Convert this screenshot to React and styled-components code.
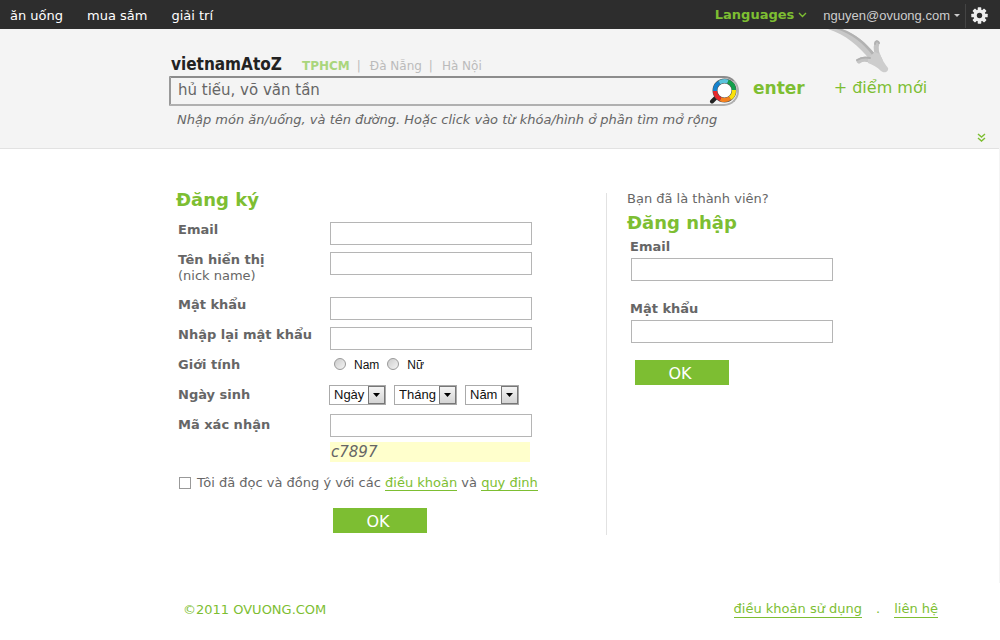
import React, { useState } from "react";
import styled, { createGlobalStyle, ThemeProvider } from "styled-components";

const theme = {
  green: "#7dbe32",
  lightGreen: "#aad67c",
  text: "#666",
  bar: "#2d2d2d",
  panel: "#f4f4f4",
  line: "#e2e2e2",
  inputLine: "#b5b5b5",
  wide: '"DejaVu Sans", Verdana, sans-serif',
  small: '"Liberation Sans", Arial, sans-serif'
};

const GlobalStyle = createGlobalStyle`
  * {
    box-sizing: border-box;
  }

  body {
    margin: 0;
    background: #fff;
    color: ${theme.text};
    font-family: ${theme.wide};
    font-size: 13px;
    line-height: 16px;
  }

  input, select, button {
    font: inherit;
    color: inherit;
  }
`;

const TopBar = styled.nav`
  display: flex;
  align-items: center;
  height: 29px;
  padding: 2px 12px 0 10px;
  background: ${props => props.theme.bar};
`;

const TopLink = styled.a`
  margin-right: 24px;
  color: #fff;
  text-decoration: none;
`;

const Account = styled.div`
  display: flex;
  align-items: center;
  margin-left: auto;
`;

const BarButton = styled.button`
  display: flex;
  align-items: center;
  gap: 4px;
  padding: 0;
  border: none;
  background: none;
  cursor: pointer;
`;

const LanguageButton = styled(BarButton)`
  margin-right: 16px;
  padding-bottom: 2px;
  color: ${props => props.theme.green};
  font-weight: bold;
`;

const UserButton = styled(BarButton)`
  padding-right: 5px;
  color: #ccc;
  font-family: ${props => props.theme.small};
`;

const SettingsButton = styled(BarButton)`
  height: 24px;
  padding-left: 5px;
  border-left: 1px solid #444;
`;

const Header = styled.header`
  position: relative;
  padding: 27px 8px 0 169px;
  height: 120px;
  background: ${props => props.theme.panel};
  border-bottom: 1px solid ${props => props.theme.line};
`;

const TitleRow = styled.div`
  display: flex;
  align-items: center;
  height: 20px;
`;

const Logo = styled.a`
  width: 133px;
  padding: 0 0 4px 2px;
  color: #222;
  font-family: "DejaVu Sans Condensed", "DejaVu Sans", sans-serif;
  font-size: 17px;
  font-weight: bold;
  text-decoration: none;
`;

const City = styled.a`
  color: ${props => (props.$active ? props.theme.lightGreen : "#bbb")};
  font-size: 12px;
  font-weight: ${props => (props.$active ? "bold" : "normal")};
  text-decoration: none;
`;

const Separator = styled.span`
  margin: 0 9px 0 7px;
  color: #bbb;
  font-size: 12px;
`;

const SearchRow = styled.form`
  display: flex;
  align-items: center;
  height: 30px;
`;

const SearchBox = styled.div`
  display: flex;
  align-items: center;
  width: 570px;
  height: 30px;
  padding: 0 0 0 7px;
  border: 2px solid #b0b0b0;
  border-top-color: #8c8c8c;
  border-left-color: #999;
  border-radius: 0 15px 15px 0;
`;

const SearchInput = styled.input`
  flex: 1;
  padding: 0 0 3px;
  border: none;
  outline: none;
  background: none;
  font-size: 15px;
`;

const EnterButton = styled.button`
  margin-left: 14px;
  padding: 0 0 6px;
  border: none;
  background: none;
  color: ${props => props.theme.green};
  font-size: 17px;
  font-weight: bold;
  cursor: pointer;
`;

const NewPlace = styled.a`
  margin-left: 29px;
  padding-bottom: 6px;
  color: ${props => props.theme.green};
  font-size: 16px;
  text-decoration: none;
`;

const Hint = styled.p`
  margin: 6px 0 0 8px;
  font-style: italic;
`;

const ArrowDrawing = styled.svg`
  position: absolute;
  top: 0;
  left: 828px;
`;

const Expand = styled.button`
  position: absolute;
  right: 13px;
  bottom: 6px;
  display: flex;
  padding: 0;
  border: none;
  background: none;
  cursor: pointer;
`;

const Body = styled.div`
  border-right: 1px solid #f4f4f4;
`;

const Columns = styled.main`
  display: flex;
  padding: 44px 0 48px 176px;
`;

const Register = styled.form`
  flex: 0 0 431px;
  border-right: 1px solid ${props => props.theme.line};
  padding-bottom: 2px;
`;

const Login = styled.form`
  flex: 1;
  padding-left: 20px;
`;

const Title = styled.h2`
  margin: 0;
  color: ${props => props.theme.green};
  font-size: 18px;
  line-height: 14px;
`;

const Fields = styled.div`
  display: flex;
  flex-direction: column;
  gap: 7px;
  margin: 15px 0 0 2px;
`;

const Field = styled.div`
  display: grid;
  grid-template-columns: 152px 1fr;
  align-items: ${props => (props.$middle ? "center" : "start")};
  min-height: ${props => (props.$middle ? 30 : 23)}px;
  margin-left: ${props => (props.$middle ? 2 : 0)}px;
`;

const Label = styled.label`
  font-weight: bold;
`;

const SubLabel = styled.span`
  display: block;
  padding-bottom: 6px;
  font-weight: normal;
`;

const TextInput = styled.input`
  width: 202px;
  height: 23px;
  padding: 0 4px;
  border: 1px solid ${props => props.theme.inputLine};
  background: #fff;
`;

const Options = styled.div`
  display: flex;
  align-items: center;
  color: #111;
  font-family: ${props => props.theme.small};
`;

const Choice = styled.label`
  display: flex;
  align-items: center;
  gap: 8px;
  margin: 0 4px;
  font-size: 12px;
`;

const Radio = styled.input`
  appearance: none;
  width: 12px;
  height: 12px;
  margin: 0 0 2px;
  border: 1px solid #999;
  border-radius: 50%;
  background: linear-gradient(135deg, #ccc, #f4f4f4);

  &:checked {
    background: radial-gradient(#333 30%, #eee 40%);
  }
`;

const SelectBox = styled.span`
  position: relative;
  margin: 0 9px 0 -1px;
`;

const Select = styled.select`
  appearance: none;
  display: block;
  height: 20px;
  padding: 0 20px 0 4px;
  border: 1px solid #aaa;
  border-radius: 0;
  background: #fff;
  color: #111;
`;

const SelectArrow = styled.span`
  position: absolute;
  top: 1px;
  right: 1px;
  display: grid;
  place-items: center;
  width: 17px;
  height: 18px;
  border: 1px solid #777;
  background: linear-gradient(#f4f4f4, #d4d4d4);
  pointer-events: none;
`;

const Captcha = styled.div`
  width: 200px;
  height: 20px;
  margin: 2px 0 0 154px;
  padding-left: 1px;
  background: #ffffcc;
  font-size: 15px;
  font-style: italic;
  line-height: 20px;
`;

const Terms = styled.div`
  display: flex;
  align-items: center;
  gap: 6px;
  margin: 13px 0 0 3px;
`;

const CheckBox = styled.input`
  appearance: none;
  width: 12px;
  height: 12px;
  margin: 0;
  border: 1px solid #999;

  &:checked {
    background: ${props => props.theme.green};
  }
`;

const Link = styled.a`
  border-bottom: 1px solid ${props => props.theme.green};
  color: ${props => props.theme.green};
  text-decoration: none;
`;

const OkButton = styled.button`
  display: block;
  width: 94px;
  height: 25px;
  padding: 2px 4px 0 0;
  border: none;
  background: ${props => props.theme.green};
  color: #fff;
  font-size: 16px;
  cursor: pointer;
`;

const RegisterButton = styled(OkButton)`
  margin: 17px 0 0 157px;
`;

const LoginButton = styled(OkButton)`
  margin: 17px 0 0 8px;
`;

const Question = styled.p`
  margin: -2px 0 9px;
`;

const LoginField = styled.div`
  display: flex;
  flex-direction: column;
  gap: 3px;
  margin: ${props => (props.$spaced ? 20 : 9)}px 0 0 4px;

  label {
    margin-left: -1px;
  }
`;

const Footer = styled.footer`
  display: flex;
  align-items: center;
  padding: 18px 62px 0 183px;
  color: ${props => props.theme.green};
`;

const FooterLinks = styled.div`
  display: flex;
  gap: 14px;
  margin-left: auto;
`;

const Chevron = () => (
  <svg width="9" height="6" viewBox="0 0 9 6" aria-hidden="true">
    <path d="M1 1l3.5 3.5L8 1" fill="none" stroke={theme.green} strokeWidth="1.4" />
  </svg>
);

const Gear = () => (
  <svg width="17" height="17" viewBox="-8.5 -8.5 17 17" aria-hidden="true">
    <g fill="#eee">
      {[0, 45, 90, 135].map(angle => (
        <rect
          key={angle}
          x="-1.8"
          y="-8.2"
          width="3.6"
          height="16.4"
          rx="0.6"
          transform={`rotate(${angle})`}
        />
      ))}
      <circle r="6" />
    </g>
    <circle r="2.7" fill={theme.bar} />
  </svg>
);

const Magnifier = () => (
  <svg width="28" height="26" viewBox="0 0 28 26" aria-hidden="true">
    <path d="M8.500 18L3 23.500" stroke="#222" strokeWidth="4" strokeLinecap="round" />
    <circle cx="15.500" cy="12.500" r="9.500" fill="#fff" stroke="#555" strokeWidth="5" />
    <g fill="none" strokeWidth="4">
      <path d="M10.300 4.600A9.500 9.500 0 0 1 19 3.700" stroke="#5bc4dc" />
      <path d="M19 3.700A9.500 9.500 0 0 1 25 12" stroke="#12a14b" />
      <path d="M25 12A9.500 9.500 0 0 1 21 20.200" stroke="#fbe20a" />
      <path d="M21 20.200A9.500 9.500 0 0 1 11.500 21.100" stroke="#f5821f" />
      <path d="M11.500 21.100A9.500 9.500 0 0 1 6 13" stroke="#e8262a" />
      <path d="M6 13A9.500 9.500 0 0 1 10.300 4.600" stroke="#1483cf" />
    </g>
  </svg>
);

const CurvedArrow = () => (
  <ArrowDrawing width="62" height="46" viewBox="0 0 62 46" aria-hidden="true">
    <path d="M0 0H14C28 5 38 14 47 25L42 31C30 16 18 6 0 0Z" fill="#c8c8c8" />
    <path d="M8 0H14C28 5 38 14 47 25L45 27C35 14 24 5 8 0Z" fill="#b2b2b2" />
    <g fill="none" stroke="#c4c4c4" strokeWidth="5" strokeLinecap="round">
      <path d="M49 14C47 20 49 26 52 31" />
      <path d="M31 32C35 29 40 30 46 33" />
    </g>
    <path
      d="M40 29L47 23L52 25C54 31 57 35 60 39C61 42 57 45 53 42C49 38 45 36 40 34Z"
      fill="#cdcdcd"
    />
    <path
      d="M29 31C34 28 38 28 42 29M47 15C47 12 50 11 51 14"
      fill="none"
      stroke="#b0b0b0"
      strokeWidth="2"
      strokeLinecap="round"
    />
  </ArrowDrawing>
);

const DateSelect = ({ name }) => (
  <SelectBox>
    <Select aria-label={name} id={name === "Ngày" ? "birthday" : undefined}>
      <option>{name}</option>
    </Select>
    <SelectArrow>
      <svg width="7" height="4" viewBox="0 0 7 4" aria-hidden="true">
        <path d="M0 0h7L3.500 4z" fill="#000" />
      </svg>
    </SelectArrow>
  </SelectBox>
);

export default function App() {
  const [query, setQuery] = useState("hủ tiếu, võ văn tần");
  const stop = e => e.preventDefault();

  return (
    <ThemeProvider theme={theme}>
      <GlobalStyle />
      <TopBar>
        <TopLink href="#an-uong">ăn uống</TopLink>
        <TopLink href="#mua-sam">mua sắm</TopLink>
        <TopLink href="#giai-tri">giải trí</TopLink>
        <Account>
          <LanguageButton>
            Languages <Chevron />
          </LanguageButton>
          <UserButton>
            nguyen@ovuong.com
            <svg width="6" height="3" viewBox="0 0 6 3" aria-hidden="true">
              <path d="M0 0h6L3 3z" fill="#ccc" />
            </svg>
          </UserButton>
          <SettingsButton aria-label="Settings">
            <Gear />
          </SettingsButton>
        </Account>
      </TopBar>

      <Body>
        <Header>
          <TitleRow>
            <Logo href="#">vietnamAtoZ</Logo>
            <City href="#tphcm" $active>TPHCM</City>
            <Separator>|</Separator>
            <City href="#da-nang">Đà Nẵng</City>
            <Separator>|</Separator>
            <City href="#ha-noi">Hà Nội</City>
          </TitleRow>
          <SearchRow onSubmit={stop}>
            <SearchBox>
              <SearchInput
                aria-label="Search"
                value={query}
                onChange={e => setQuery(e.target.value)}
              />
              <Magnifier />
            </SearchBox>
            <EnterButton>enter</EnterButton>
            <NewPlace href="#new">+ điểm mới</NewPlace>
          </SearchRow>
          <Hint>
            Nhập món ăn/uống, và tên đường. Hoặc click vào từ khóa/hình ở phần tìm mở rộng
          </Hint>
          <CurvedArrow />
          <Expand aria-label="Expand">
            <svg width="9" height="9" viewBox="0 0 9 9" aria-hidden="true">
              <path
                d="M1 1l3.500 3L8 1M1 5l3.500 3L8 5"
                fill="none"
                stroke={theme.green}
                strokeWidth="1.4"
              />
            </svg>
          </Expand>
        </Header>

        <Columns>
          <Register onSubmit={stop}>
            <Title>Đăng ký</Title>
            <Fields>
              <Field>
                <Label htmlFor="email">Email</Label>
                <TextInput id="email" />
              </Field>
              <Field>
                <Label htmlFor="nick">
                  Tên hiển thị
                  <SubLabel>(nick name)</SubLabel>
                </Label>
                <TextInput id="nick" />
              </Field>
              <Field>
                <Label htmlFor="password">Mật khẩu</Label>
                <TextInput id="password" type="password" />
              </Field>
              <Field>
                <Label htmlFor="repeat">Nhập lại mật khẩu</Label>
                <TextInput id="repeat" type="password" />
              </Field>
            </Fields>
            <Field $middle>
              <Label as="span">Giới tính</Label>
              <Options>
                <Choice>
                  <Radio type="radio" name="gender" /> Nam
                </Choice>
                <Choice>
                  <Radio type="radio" name="gender" /> Nữ
                </Choice>
              </Options>
            </Field>
            <Field $middle>
              <Label htmlFor="birthday">Ngày sinh</Label>
              <Options>
                <DateSelect name="Ngày" />
                <DateSelect name="Tháng" />
                <DateSelect name="Năm" />
              </Options>
            </Field>
            <Field $middle>
              <Label htmlFor="code">Mã xác nhận</Label>
              <TextInput id="code" />
            </Field>
            <Captcha>c7897</Captcha>
            <Terms>
              <CheckBox type="checkbox" id="terms" />
              <label htmlFor="terms">
                Tôi đã đọc và đồng ý với các <Link href="#terms">điều khoản</Link> và{" "}
                <Link href="#rules">quy định</Link>
              </label>
            </Terms>
            <RegisterButton>OK</RegisterButton>
          </Register>

          <Login onSubmit={stop}>
            <Question>Bạn đã là thành viên?</Question>
            <Title>Đăng nhập</Title>
            <LoginField>
              <Label htmlFor="login-email">Email</Label>
              <TextInput id="login-email" />
            </LoginField>
            <LoginField $spaced>
              <Label htmlFor="login-password">Mật khẩu</Label>
              <TextInput id="login-password" type="password" />
            </LoginField>
            <LoginButton>OK</LoginButton>
          </Login>
        </Columns>
      </Body>

      <Footer>
        ©2011 OVUONG.COM
        <FooterLinks>
          <Link href="#dieu-khoan">điều khoản sử dụng</Link>
          <span>.</span>
          <Link href="#lien-he">liên hệ</Link>
        </FooterLinks>
      </Footer>
    </ThemeProvider>
  );
}
